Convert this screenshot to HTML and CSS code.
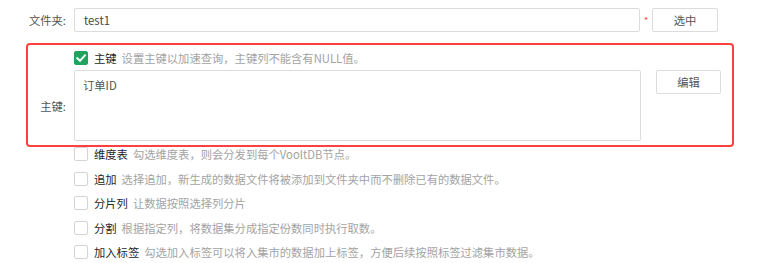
FILE: index.html
```html
<!DOCTYPE html>
<html lang="zh-CN">
<head>
<meta charset="utf-8">
<link rel="stylesheet" href="styles.css">
</head>
<body>
<div class="form">
  <div class="row folder-row">
    <label class="label">文件夹:</label>
    <div class="input">test1</div>
    <span class="req">*</span>
    <button class="btn btn-select">选中</button>
  </div>

  <div class="pk-box">
    <div class="pk-check check-row">
      <span class="cb checked"><svg viewBox="0 0 14 14" width="14" height="14"><path d="M3.2 7.2 L6 9.8 L10.9 4.4" fill="none" stroke="#fff" stroke-width="1.9" stroke-linecap="square"/></svg></span>
      <span class="title">主键</span>
      <span class="desc">设置主键以加速查询，主键列不能含有NULL值。</span>
    </div>
    <label class="label pk-label">主键:</label>
    <div class="textarea">订单ID</div>
    <button class="btn btn-edit">编辑</button>
  </div>

  <div class="options">
    <div class="check-row"><span class="cb"></span><span class="title">维度表</span><span class="desc">勾选维度表，则会分发到每个VooltDB节点。</span></div>
    <div class="check-row"><span class="cb"></span><span class="title">追加</span><span class="desc">选择追加，新生成的数据文件将被添加到文件夹中而不删除已有的数据文件。</span></div>
    <div class="check-row"><span class="cb"></span><span class="title">分片列</span><span class="desc">让数据按照选择列分片</span></div>
    <div class="check-row"><span class="cb"></span><span class="title">分割</span><span class="desc">根据指定列，将数据集分成指定份数同时执行取数。</span></div>
    <div class="check-row"><span class="cb"></span><span class="title">加入标签</span><span class="desc">勾选加入标签可以将入集市的数据加上标签，方便后续按照标签过滤集市数据。</span></div>
  </div>
</div>
</body>
</html>
```

FILE: styles.css
```css
* { box-sizing: border-box; }
html, body { margin: 0; padding: 0; background: #fff; }
body {
  font-family: "Noto Sans CJK SC", "Microsoft YaHei", sans-serif;
  font-size: 11.3px;
  color: #333;
}
.form { padding-top: 8px; }

.row { display: flex; align-items: center; }
.label {
  color: #555;
  font-size: 11.3px;
  text-align: right;
  white-space: nowrap;
}
.folder-row .label { width: 66px; margin-right: 8px; }

.input {
  width: 566px;
  height: 24px;
  border: 1px solid #dcdcdc;
  border-radius: 2px;
  padding: 0 9px;
  line-height: 22px;
  color: #444;
  font-size: 11.3px;
}
.req {
  width: 12px;
  text-align: center;
  color: #f44;
  font-size: 9px;
  line-height: 1;
}
.btn {
  height: 24px;
  width: 66px;
  background: #fff;
  border: 1px solid #dcdcdc;
  border-radius: 2px;
  font-family: inherit;
  font-size: 11.3px;
  color: #555;
  padding: 0;
}

.pk-box {
  margin: 11px 0 0 26px;
  width: 708px;
  height: 104px;
  border: 2px solid #ff4040;
  border-radius: 4px;
  padding: 3px 11px 4px 0;
  display: grid;
  grid-template-columns: 46px 567px 1fr;
  grid-template-rows: 20px 71px;
  row-gap: 2px;
  align-items: center;
}
.pk-check { grid-column: 2 / 4; grid-row: 1; }
.pk-label { grid-column: 1; grid-row: 2; padding-right: 8px; padding-top: 1px; }
.textarea {
  grid-column: 2;
  grid-row: 2;
  height: 71px;
  border: 1px solid #dcdcdc;
  border-radius: 2px;
  padding: 6px 8px;
  color: #555;
  font-size: 11.3px;
  line-height: 16px;
  align-self: stretch;
}
.btn-edit { grid-column: 3; grid-row: 2; align-self: start; justify-self: end; width: 65px; }

.check-row {
  display: flex;
  align-items: center;
  height: 14px;
  white-space: nowrap;
}
.cb {
  width: 14px;
  height: 14px;
  border: 1px solid #d4d4d4;
  border-radius: 2px;
  background: #fff;
  flex: none;
  margin-right: 6px;
  display: flex;
}
.cb.checked { background: #1fa45f; border-color: #1fa45f; }
.cb.checked svg { margin: -1px; }
.title { color: #262626; font-weight: 400; margin-right: 5px; }
.desc { color: #a3a3a3; }

.options {
  padding: 0 0 0 74px;
  display: flex;
  flex-direction: column;
  gap: 10.6px;
}
```
